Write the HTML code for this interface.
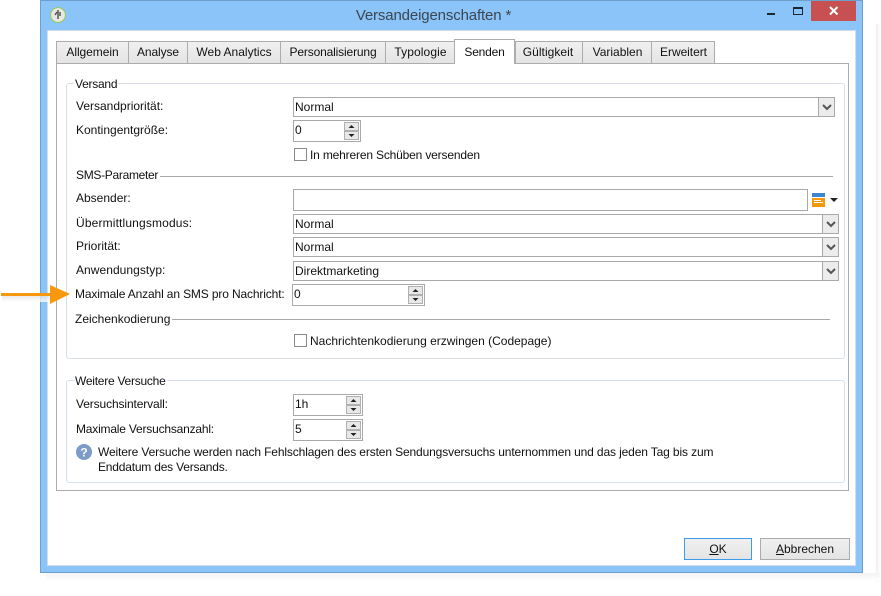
<!DOCTYPE html>
<html><head><meta charset="utf-8"><style>
html,body{margin:0;padding:0;background:#fff}
body{width:881px;height:596px;overflow:hidden;position:relative;font:12px "Liberation Sans",sans-serif;color:#111}
div,span.t{position:absolute;box-sizing:border-box;white-space:nowrap}
.t{line-height:14px}
.tab{top:41px;height:23px;background:linear-gradient(#f0f0f0,#e4e4e4);border:1px solid #acacac;text-align:center;line-height:21px}
.f{background:#fff;border:1px solid #a9a9a9;line-height:18px;padding-left:1px;font-size:12px}
.dd{position:absolute;right:0;top:0;bottom:0;width:16px;background:#ececec;border-left:1px solid #a9a9a9}
.up,.dn{position:absolute;width:15px;height:9px;background:#e8e8e8;border:1px solid #b0b0b0}
.ck{width:13px;height:13px;background:#fff;border:1px solid #8a8a8a}
u{text-decoration:underline}
</style></head><body>
<!-- shadow -->
<div style="left:876px;top:24px;width:4px;height:558px;background:linear-gradient(90deg,#eee,#fff)"></div>
<div style="left:46px;top:573px;width:834px;height:8px;background:linear-gradient(#f3f3f3,#fff)"></div>
<!-- window -->
<div style="left:40px;top:0;width:823px;height:573px;background:#8ac4f9;border:1px solid #6d9fcf"></div>
<div style="left:47px;top:30px;width:809px;height:536px;background:#fff;border:1px solid #d4dde6"></div>
<div class="t" style="left:40px;width:787px;top:7px;line-height:18px;font-size:15px;text-align:center;color:#3c4650;letter-spacing:-.14px">Versandeigenschaften *</div>
<!-- app icon -->
<svg style="position:absolute;left:49px;top:7px" width="18" height="18"><circle cx="9" cy="8" r="7.4" fill="#e9e9e4" stroke="#9ac85a" stroke-width="1"/><path d="M9 3v9M6 8l2-3M11 5v4" stroke="#555" stroke-width="1.5" fill="none"/></svg>
<!-- window buttons -->
<div style="left:767px;top:13px;width:8px;height:2px;background:#1b2733"></div>
<div style="left:793px;top:7px;width:10px;height:8px;border:1px solid #1b2733;border-top-width:2px"></div>
<div style="left:811px;top:1px;width:45px;height:20px;background:#c75050"></div>
<svg style="position:absolute;left:829px;top:6px" width="10" height="10"><path d="M1 1l7.5 7.5M8.500 1L1 8.500" stroke="#fff" stroke-width="2"/></svg>
<!-- tab panel -->
<div style="left:56px;top:63px;width:793px;height:428px;background:#fff;border:1px solid #acacac"></div>
<div class="tab" style="left:56px;width:73px;letter-spacing:-.05px">Allgemein</div>
<div class="tab" style="left:128px;width:60px;letter-spacing:-.1px">Analyse</div>
<div class="tab" style="left:187px;width:94px">Web Analytics</div>
<div class="tab" style="left:280px;width:106px;letter-spacing:-.15px">Personalisierung</div>
<div class="tab" style="left:385px;width:70px;padding-left:1px;letter-spacing:.1px">Typologie</div>
<div class="tab" style="left:515px;width:68px;padding-right:2px;letter-spacing:.05px">Gültigkeit</div>
<div class="tab" style="left:582px;width:70px;padding-left:1px">Variablen</div>
<div class="tab" style="left:651px;width:64px;padding-left:1px;letter-spacing:-.05px">Erweitert</div>
<div class="tab" style="left:454px;top:39px;width:61px;height:25px;background:#fff;border-bottom:0;line-height:24px;letter-spacing:-.2px">Senden</div>
<!-- group 1 -->
<div style="left:66px;top:83px;width:779px;height:276px;border:1px solid #d9dfe4;border-radius:3px"></div>
<div class="t" style="left:74px;top:77px;background:#fff;padding:0 1px;letter-spacing:-.25px">Versand</div>
<div class="t" style="left:76px;top:99px">Versandpriorität:</div>
<div class="f" style="left:293px;top:97px;width:542px;height:20px">Normal<div class="dd"></div></div>
<svg style="position:absolute;left:822px;top:104px" width="10" height="7"><path d="M1 1l4 4 4-4" stroke="#555" stroke-width="2" fill="none"/></svg>
<div class="t" style="left:76px;top:123px">Kontingentgröße:</div>
<div class="f" style="left:293px;top:120px;width:68px;height:22px">0</div>
<div class="up" style="left:344px;top:122px"></div><div class="dn" style="left:344px;top:131px"></div>
<svg style="position:absolute;left:344px;top:122px" width="15" height="18"><path d="M7.500 3l3 3h-6zM7.500 15l3-3h-6z" fill="#222"/></svg>
<div class="ck" style="left:294px;top:148px"></div>
<div class="t" style="left:310px;top:148px;letter-spacing:-.17px">In mehreren Schüben versenden</div>
<!-- SMS -->
<div class="t" style="left:76px;top:168px;background:#fff;padding-right:2px;z-index:2;letter-spacing:-.3px">SMS-Parameter</div>
<div style="left:76px;top:176px;width:757px;height:1px;background:#a9a9a9"></div>
<div class="t" style="left:76px;top:191px">Absender:</div>
<div class="f" style="left:293px;top:189px;width:515px;height:22px"></div>
<svg style="position:absolute;left:812px;top:193px" width="26" height="15"><rect width="13" height="4" fill="#3a87d0"/><rect y="5" width="13" height="9" fill="#f49a0a"/><path d="M2 7.500h7M2 9.500h9" stroke="#fff" stroke-width="1"/><path d="M18 5h8l-4 4z" fill="#222"/></svg>
<div class="t" style="left:76px;top:216px;letter-spacing:.15px">Übermittlungsmodus:</div>
<div class="f" style="left:293px;top:214px;width:546px;height:20px">Normal<div class="dd"></div></div>
<svg style="position:absolute;left:826px;top:221px" width="10" height="7"><path d="M1 1l4 4 4-4" stroke="#555" stroke-width="2" fill="none"/></svg>
<div class="t" style="left:76px;top:239px">Priorität:</div>
<div class="f" style="left:293px;top:237px;width:546px;height:20px">Normal<div class="dd"></div></div>
<svg style="position:absolute;left:826px;top:244px" width="10" height="7"><path d="M1 1l4 4 4-4" stroke="#555" stroke-width="2" fill="none"/></svg>
<div class="t" style="left:76px;top:263px;letter-spacing:.05px">Anwendungstyp:</div>
<div class="f" style="left:293px;top:261px;width:546px;height:20px">Direktmarketing<div class="dd"></div></div>
<svg style="position:absolute;left:826px;top:268px" width="10" height="7"><path d="M1 1l4 4 4-4" stroke="#555" stroke-width="2" fill="none"/></svg>
<div class="t" style="left:75px;top:287px;letter-spacing:-.14px">Maximale Anzahl an SMS pro Nachricht:</div>
<div class="f" style="left:292px;top:284px;width:133px;height:22px">0</div>
<div class="up" style="left:408px;top:286px"></div><div class="dn" style="left:408px;top:295px"></div>
<svg style="position:absolute;left:408px;top:286px" width="15" height="18"><path d="M7.500 3l3 3h-6zM7.500 15l3-3h-6z" fill="#222"/></svg>
<div class="t" style="left:75px;top:312px;background:#fff;padding-right:2px;z-index:2">Zeichenkodierung</div>
<div style="left:75px;top:319px;width:755px;height:1px;background:#a9a9a9"></div>
<div class="ck" style="left:294px;top:334px"></div>
<div class="t" style="left:310px;top:334px">Nachrichtenkodierung erzwingen (Codepage)</div>
<!-- arrow -->
<div style="left:2px;top:296px;width:48px;height:6px;background:linear-gradient(#e4e4e4,#fff);opacity:.8"></div>
<svg style="position:absolute;left:0;top:284px" width="72" height="22"><path d="M1 9h49V1l20 9-20 10v-8H1z" fill="#f7980f"/></svg>
<!-- group 2 -->
<div style="left:66px;top:380px;width:779px;height:103px;border:1px solid #d5e0ea;border-radius:3px"></div>
<div class="t" style="left:75px;top:374px;background:#fff;padding-right:1px;letter-spacing:-.25px">Weitere Versuche</div>
<div class="t" style="left:76px;top:397px;letter-spacing:-.12px">Versuchsintervall:</div>
<div class="f" style="left:293px;top:394px;width:70px;height:22px">1h</div>
<div class="up" style="left:346px;top:396px"></div><div class="dn" style="left:346px;top:405px"></div>
<svg style="position:absolute;left:346px;top:396px" width="15" height="18"><path d="M7.500 3l3 3h-6zM7.500 15l3-3h-6z" fill="#222"/></svg>
<div class="t" style="left:76px;top:422px;letter-spacing:-.2px">Maximale Versuchsanzahl:</div>
<div class="f" style="left:293px;top:419px;width:70px;height:22px">5</div>
<div class="up" style="left:346px;top:421px"></div><div class="dn" style="left:346px;top:430px"></div>
<svg style="position:absolute;left:346px;top:421px" width="15" height="18"><path d="M7.500 3l3 3h-6zM7.500 15l3-3h-6z" fill="#222"/></svg>
<svg style="position:absolute;left:76px;top:444px" width="16" height="16"><circle cx="8" cy="8" r="8" fill="#7b9cc8"/><text x="8" y="12.500" text-anchor="middle" font-family="Liberation Sans" font-weight="bold" font-size="12" fill="#fff">?</text></svg>
<div class="t" style="left:98px;top:445px;letter-spacing:-.13px">Weitere Versuche werden nach Fehlschlagen des ersten Sendungsversuchs unternommen und das jeden Tag bis zum</div>
<div class="t" style="left:98px;top:460px;letter-spacing:-.2px">Enddatum des Versands.</div>
<!-- buttons -->
<div style="left:684px;top:538px;width:68px;height:22px;background:linear-gradient(#f0f0f0,#e4e4e4);border:1px solid #3d9be9;text-align:center;line-height:20px"><u>O</u>K</div>
<div style="left:760px;top:538px;width:90px;height:22px;background:linear-gradient(#f0f0f0,#e4e4e4);border:1px solid #acacac;text-align:center;line-height:20px"><u>A</u>bbrechen</div>
</body></html>
